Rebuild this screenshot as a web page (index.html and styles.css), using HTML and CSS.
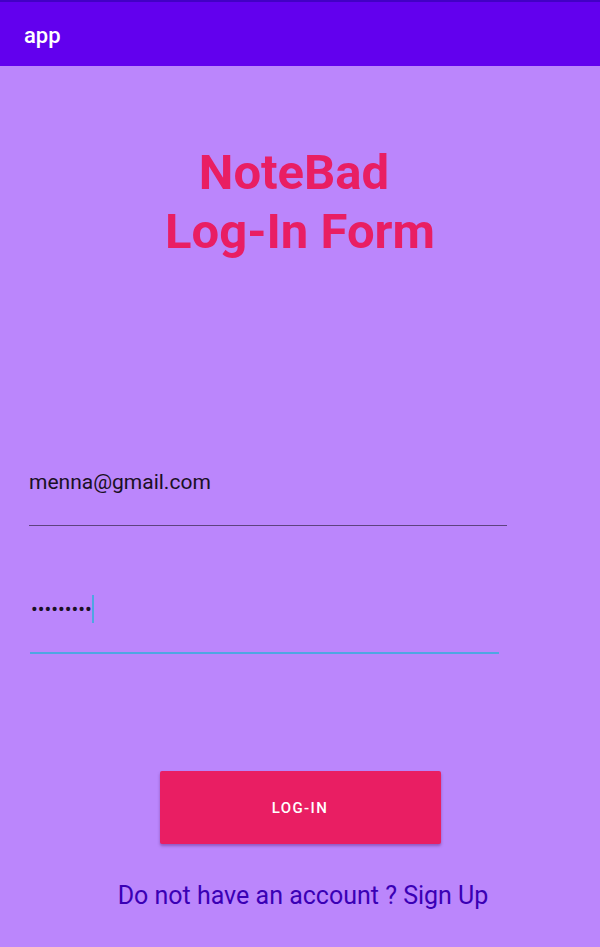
FILE: index.html
```html
<!DOCTYPE html>
<html lang="en">
<head>
<meta charset="utf-8">
<title>app</title>
<link rel="stylesheet" href="styles.css">
</head>
<body>
<header class="appbar"><span class="appbar-title">app</span></header>
<main class="screen">
  <h1 class="title"><span class="title-line title-first">NoteBad</span><span class="title-line">Log-In Form</span></h1>
  <div class="field field-email"><span class="field-value">menna@gmail.com</span></div>
  <div class="field field-password"><span class="field-value dots">•••••••••</span><span class="cursor"></span></div>
  <button class="btn-login" type="button">LOG-IN</button>
  <p class="signup">Do not have an account ? Sign Up</p>
</main>
</body>
</html>
```
FILE: styles.css
```css
html, body {
  margin: 0;
  padding: 0;
}
body {
  background: #bb86fc;
  font-family: Roboto, "Liberation Sans", sans-serif;
  width: 600px;
  height: 947px;
  overflow: hidden;
}
.appbar {
  box-sizing: border-box;
  height: 66px;
  border-top: 2px solid #4200c4;
  background: #6200ee;
  display: flex;
  align-items: center;
  padding-left: 24px;
}
.appbar-title {
  color: #ffffff;
  font-size: 22px;
  font-weight: 500;
  margin-top: 2px;
}
.screen {
  display: flex;
  flex-direction: column;
}
.title {
  margin: 77px 0 0 0;
  font-size: 49px;
  line-height: 59px;
  font-weight: 700;
  color: #e91e63;
  text-align: center;
  display: flex;
  flex-direction: column;
  align-items: center;
}
.title-first {
  padding-right: 12px;
}
.field {
  margin-left: 29px;
  box-sizing: content-box;
  height: 28px;
  display: flex;
  align-items: center;
  padding-bottom: 29px;
}
.field-email {
  width: 478px;
  margin-top: 207px;
  border-bottom: 1px solid #5e437f;
}
.field-password {
  width: 469px;
  margin-left: 30px;
  margin-top: 69px;
  border-bottom: 2px solid #4fa6e2;
}
.field-value {
  font-size: 21px;
  line-height: 28px;
  color: #1a1024;
}
.dots {
  font-size: 20px;
  letter-spacing: 0px;
  margin-left: 1px;
}
.cursor {
  width: 2px;
  height: 28px;
  background: #4fa6e2;
  margin-left: 0px;
}
.btn-login {
  align-self: center;
  margin-top: 117px;
  width: 281px;
  height: 73px;
  border: none;
  border-radius: 2px;
  background: #e91e63;
  color: #ffffff;
  font-family: Roboto, "Liberation Sans", sans-serif;
  font-size: 15px;
  font-weight: 500;
  letter-spacing: 1.4px;
  box-shadow: 0 2px 3px rgba(60, 0, 80, 0.35);
  padding: 0;
}
.signup {
  margin: 37px 0 0 0;
  padding-left: 6px;
  font-size: 25px;
  line-height: 30px;
  color: #3a00b5;
  text-align: center;
}
```
